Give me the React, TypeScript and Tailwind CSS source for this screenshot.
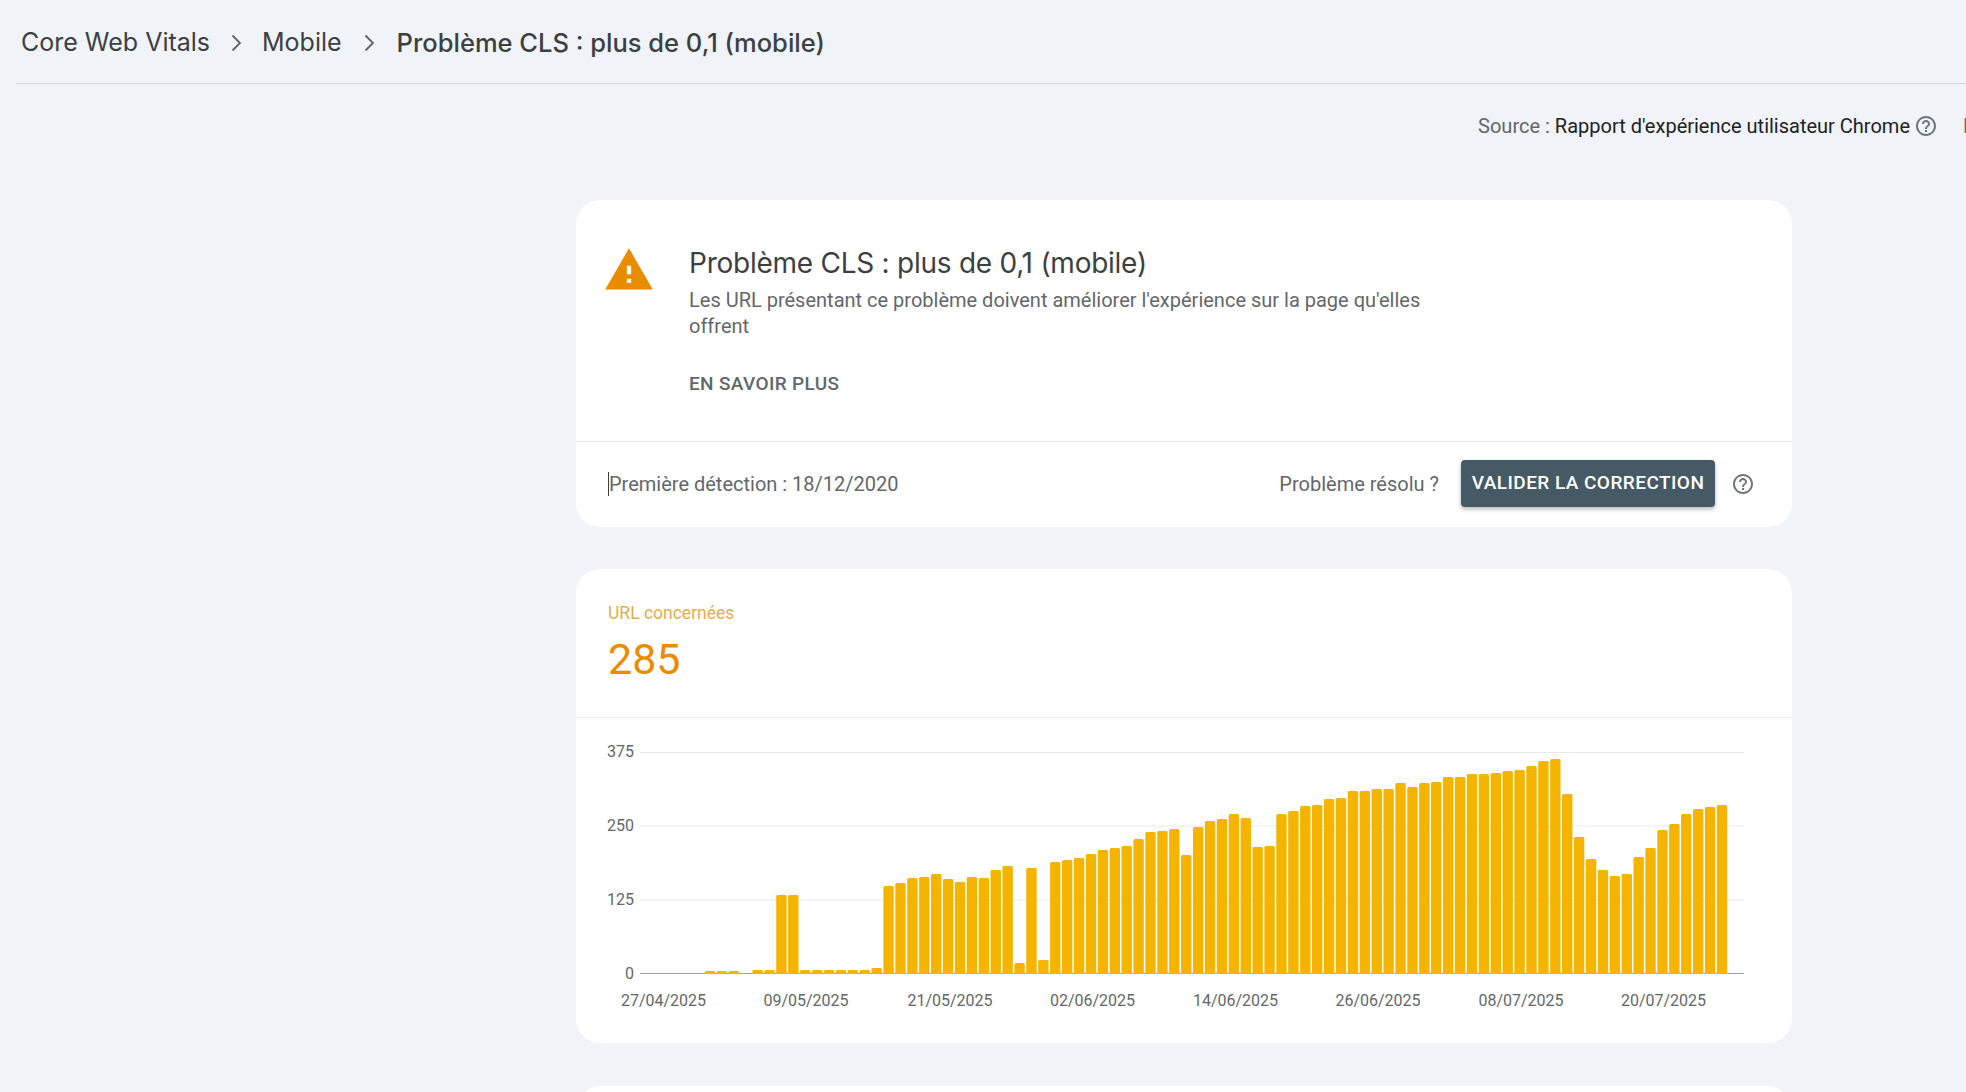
const TOPS = [
  971, 971, 971, 0, 970, 970, 895, 895, 970, 970, 970, 970, 970, 970, 968, 886, 883, 878, 877, 874, 879, 882, 877, 878,
  870, 866, 963, 868, 960, 862, 860, 858, 854, 850, 848, 846, 839, 832, 831, 829, 855, 827, 821, 819, 814, 818, 847, 846,
  814, 811, 806, 805, 799, 798, 791, 791, 789, 789, 783, 787, 783, 782, 777, 777, 774, 774, 773, 771, 770, 766, 761, 759,
  794, 837, 859, 870, 876, 874, 857, 848, 830, 824, 814, 809, 807, 805,
];

const Y_TICKS = [
  { label: "375", y: 752.5 },
  { label: "250", y: 826 },
  { label: "125", y: 900 },
];

const X_TICKS = [
  { label: "27/04/2025", x: 663.5 },
  { label: "09/05/2025", x: 806 },
  { label: "21/05/2025", x: 950 },
  { label: "02/06/2025", x: 1092.5 },
  { label: "14/06/2025", x: 1235.5 },
  { label: "26/06/2025", x: 1378 },
  { label: "08/07/2025", x: 1521 },
  { label: "20/07/2025", x: 1663.5 },
];

const Help = () => (
  <svg viewBox="0 0 24 24" className="h-6 w-6 shrink-0 fill-[#70757a]">
    <path d="M11 18h2v-2h-2v2zm1-16C6.48 2 2 6.48 2 12s4.48 10 10 10 10-4.48 10-10S17.52 2 12 2zm0 18c-4.41 0-8-3.59-8-8s3.59-8 8-8 8 3.59 8 8-3.59 8-8 8zm0-14c-2.21 0-4 1.79-4 4h2c0-1.1.9-2 2-2s2 .9 2 2c0 2-3 1.75-3 5h2c0-2.25 3-2.5 3-5 0-2.21-1.79-4-4-4z" />
  </svg>
);

const Chevron = () => (
  <svg viewBox="0 0 10 18" className="h-[18px] w-[10px] shrink-0 fill-none stroke-[#5f6368] stroke-[1.8]">
    <path d="M1.5 1.5 9 9l-7.5 7.5" />
  </svg>
);

const Chart = () => (
  <svg viewBox="576 718 1216 325" className="block h-[325px] w-[1216px]">
    {Y_TICKS.map((t) => (
      <g key={t.label}>
        <line x1={640} x2={1744} y1={t.y} y2={t.y} stroke="#e8eaed" strokeWidth={1} />
        <text x={634} y={t.y + 4.5} textAnchor="end" fontSize={16} fill="#63676b">
          {t.label}
        </text>
      </g>
    ))}
    <text x={634} y={978.5} textAnchor="end" fontSize={16} fill="#63676b">
      0
    </text>
    <line x1={640} x2={1744} y1={973.5} y2={973.5} stroke="#9aa0a6" strokeWidth={1} />
    {TOPS.map((top, i) =>
      top ? (
        <path
          key={i}
          fill="#f4b400"
          d={`M${704.8 + i * 11.906} 974V${top + 1.5}q0-1.5 1.5-1.5h7.4q1.5 0 1.5 1.5V974z`}
        />
      ) : null,
    )}
    {X_TICKS.map((t) => (
      <text key={t.label} x={t.x} y={1005.5} textAnchor="middle" fontSize={16} fill="#63676b">
        {t.label}
      </text>
    ))}
  </svg>
);

const App = () => {
  return (
    <div className="h-[1092px] w-full overflow-hidden bg-[#f0f3f8] font-['Roboto',sans-serif]">
      <header className="ml-4 flex h-[84px] items-center border-b border-[#d6dade] pl-[5px] pt-[3px] font-['Inter',sans-serif] text-[25px] text-[#3c4043]">
        <span>Core Web Vitals</span>
        <span className="mx-[21px]">
          <Chevron />
        </span>
        <span>Mobile</span>
        <span className="ml-[22px] mr-[23px]">
          <Chevron />
        </span>
        <span className="text-[25.5px] font-medium">Problème CLS : plus de 0,1 (mobile)</span>
      </header>

      <div className="mt-[30px] flex h-6 items-center justify-end whitespace-nowrap text-[20px]">
        <span className="text-[#63676b]">Source :&nbsp;</span>
        <span className="text-[#202124]">Rapport d'expérience utilisateur Chrome</span>
        <span className="ml-1">
          <Help />
        </span>
        <span className="ml-[25px] w-[3px] overflow-hidden text-[#63676b]">D</span>
      </div>

      <section className="ml-[576px] mt-[62px] w-[1216px] rounded-[24px] bg-white">
        <div className="flex h-[242px] items-start border-b border-[#e5e7e9] pl-[27px] pt-[44px]">
          <svg viewBox="0 0 24 24" className="h-[52px] w-[52px] shrink-0 fill-[#ea8c00]">
            <path d="M1 21h22L12 2 1 21zm12-3h-2v-2h2v2zm0-4h-2v-4h2v4z" />
          </svg>
          <div className="ml-[34px]">
            <h1 className="mt-px font-['Inter',sans-serif] text-[28px] leading-9 tracking-[-0.25px] text-[#3c4043]">
              Problème CLS : plus de 0,1 (mobile)
            </h1>
            <p className="mt-1.5 max-w-[740px] text-[20px] leading-[26px] text-[#63676b]">
              Les URL présentant ce problème doivent améliorer l'expérience sur la page qu'elles offrent
            </p>
            <div className="mt-[33px] text-[19px] font-medium leading-6 tracking-[0.35px] text-[#63676b]">
              EN SAVOIR PLUS
            </div>
          </div>
        </div>
        <div className="flex h-[85px] items-center pb-0.5 pl-8 pr-[37px]">
          <span className="border-l border-[#3c4043] text-[20px] leading-6 text-[#63676b]">
            Première détection : 18/12/2020
          </span>
          <span className="ml-auto text-[20px] text-[#63676b]">Problème résolu ?</span>
          <button className="ml-[22px] h-[47px] w-[254px] rounded bg-[#455a64] text-[19px] font-medium tracking-[0.45px] text-white shadow-[0_2px_4px_rgba(60,64,67,0.4)]">
            VALIDER LA CORRECTION
          </button>
          <span className="ml-4">
            <Help />
          </span>
        </div>
      </section>

      <section className="ml-[576px] mt-[42px] w-[1216px] rounded-[24px] bg-white">
        <div className="h-[149px] border-b border-[#eeeff1] pl-8 pt-[33px]">
          <div className="text-[17.5px] leading-[22px] text-[#e2ae4a]">URL concernées</div>
          <div className="mt-[7px] text-[43px] leading-[56px] text-[#ea8c00]">285</div>
        </div>
        <Chart />
      </section>

      <section className="ml-[576px] mt-[43px] h-[300px] w-[1216px] rounded-[24px] bg-white" />
    </div>
  );
};

export default App;
